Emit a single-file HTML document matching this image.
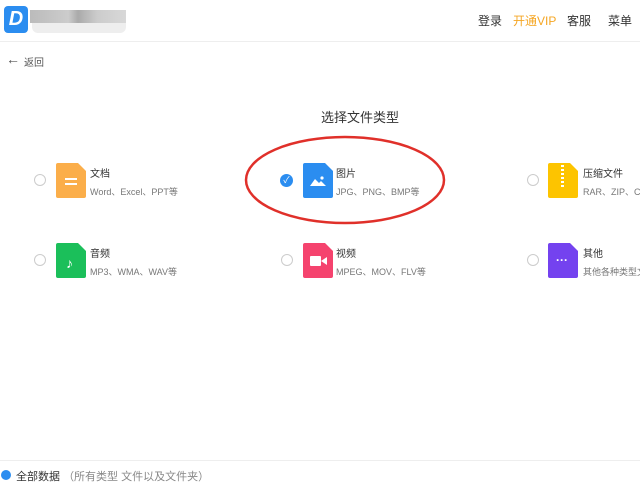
<!DOCTYPE html>
<html><head><meta charset="utf-8"><style>
*{margin:0;padding:0;box-sizing:border-box}
body{width:640px;height:480px;background:#fff;position:relative;overflow:hidden;font-family:"Liberation Sans","Noto Sans CJK SC",sans-serif;color:#333}
.a{position:absolute}
.hdr{left:0;top:0;width:640px;height:42px;border-bottom:1px solid #eee}
.nav{top:12px;font-size:12px;color:#333}
.radio{width:12px;height:12px;border:1px solid #ccc;border-radius:50%;background:#fff}
.ic{width:30px;height:35px;border-radius:2px}
.ic:after{content:"";position:absolute;right:0;top:0;border-style:solid;border-width:0 8px 8px 0;border-color:transparent #fff transparent transparent}
.lbl{font-size:10px;color:#333}
.sub{font-size:9px;color:#777;white-space:nowrap}
</style></head><body>
<div class="a hdr"></div>
<div class="a" style="left:4px;top:6px;width:24px;height:27px;background:#2b8df0;border-radius:4px;color:#fff;font-weight:bold;font-style:italic;font-size:20px;line-height:27px;text-align:center">D</div>
<div class="a" style="left:30px;top:10px;width:96px;height:13px;background:linear-gradient(90deg,#bbb,#ccc 40%,#aaa 50%,#ccc 70%,#d8d8d8)"></div>
<div class="a" style="left:32px;top:23px;width:94px;height:10px;background:#eee;border-radius:0 0 6px 6px"></div>
<div class="a nav" style="left:478px">登录</div>
<div class="a nav" style="left:513px;color:#f5a623">开通VIP</div>
<div class="a nav" style="left:567px">客服</div>
<div class="a nav" style="left:608px">菜单</div>
<div class="a" style="left:6px;top:51px;font-size:14px;color:#555">&#8592;</div>
<div class="a" style="left:24px;top:54px;font-size:10px;color:#555">返回</div>
<div class="a" style="left:321px;top:107px;font-size:13px;color:#333">选择文件类型</div>

<div class="a radio" style="left:34px;top:174px"></div>
<div class="a ic" style="left:56px;top:163px;background:#fbae4a"><div class="a" style="left:9px;top:15px;width:12px;height:2px;background:#fff;box-shadow:0 5px 0 #fff"></div></div>
<div class="a lbl" style="left:90px;top:165px">文档</div>
<div class="a sub" style="left:90px;top:185px">Word、Excel、PPT等</div>

<div class="a" style="left:280px;top:174px;width:13px;height:13px;border-radius:50%;background:#2b8df0;color:#fff;font-size:9px;line-height:13px;text-align:center">✓</div>
<div class="a ic" style="left:303px;top:163px;background:#2b8df0"><svg class="a" style="left:7px;top:12px" width="16" height="12"><path d="M0 11 L5 4 L9 8 L11 6 L16 11Z" fill="#fff"/><circle cx="12" cy="3" r="1.6" fill="#fff"/></svg></div>
<div class="a lbl" style="left:336px;top:165px">图片</div>
<div class="a sub" style="left:336px;top:185px">JPG、PNG、BMP等</div>

<div class="a radio" style="left:527px;top:174px"></div>
<div class="a ic" style="left:548px;top:163px;background:#fdc400"><div class="a" style="left:13px;top:2px;width:3px;height:22px;background:repeating-linear-gradient(#fff 0 2px,transparent 2px 4px)"></div></div>
<div class="a lbl" style="left:583px;top:165px">压缩文件</div>
<div class="a sub" style="left:583px;top:185px">RAR、ZIP、CAB等</div>

<div class="a radio" style="left:34px;top:254px"></div>
<div class="a ic" style="left:56px;top:243px;background:#1bbf5a"><div class="a" style="left:10px;top:12px;color:#fff;font-size:14px">♪</div></div>
<div class="a lbl" style="left:90px;top:245px">音频</div>
<div class="a sub" style="left:90px;top:265px">MP3、WMA、WAV等</div>

<div class="a radio" style="left:281px;top:254px"></div>
<div class="a ic" style="left:303px;top:243px;background:#f5436e"><svg class="a" style="left:7px;top:13px" width="17" height="10"><rect x="0" y="0" width="11" height="10" rx="1" fill="#fff"/><path d="M11 5 L17 1 V9Z" fill="#fff"/></svg></div>
<div class="a lbl" style="left:336px;top:245px">视频</div>
<div class="a sub" style="left:336px;top:265px">MPEG、MOV、FLV等</div>

<div class="a radio" style="left:527px;top:254px"></div>
<div class="a ic" style="left:548px;top:243px;background:#7442ef"><div class="a" style="left:8px;top:10px;color:#fff;font-size:12px;font-weight:bold">···</div></div>
<div class="a lbl" style="left:583px;top:245px">其他</div>
<div class="a sub" style="left:583px;top:265px">其他各种类型文件</div>

<svg class="a" style="left:0;top:0" width="640" height="480"><ellipse cx="345" cy="180" rx="99" ry="43" fill="none" stroke="#e0302a" stroke-width="2.5"/></svg>

<div class="a" style="left:0;top:460px;width:640px;height:1px;background:#eee"></div>
<div class="a" style="left:1px;top:470px;width:10px;height:10px;border-radius:50%;background:#2b8df0"></div>
<div class="a" style="left:16px;top:468px;font-size:11px;color:#333;white-space:nowrap">全部数据 <span style="color:#888">（所有类型 文件以及文件夹）</span></div>
</body></html>
